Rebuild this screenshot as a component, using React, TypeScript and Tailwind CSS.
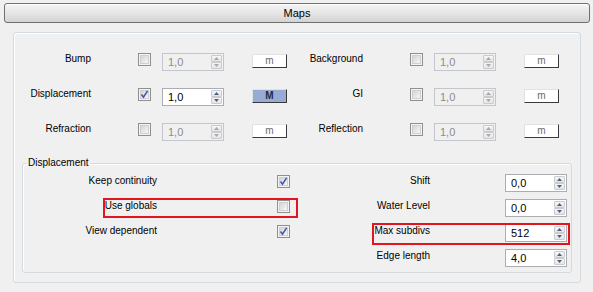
import React from "react";

type SpinProps = { value: string; enabled?: boolean };

const Check = ({ checked = false }: { checked?: boolean }) => (
  <div className="flex h-[13px] w-[13px] shrink-0 items-center justify-center border border-[#8f8f8f] bg-[#f4f4f4]">
    <div className="relative h-[9px] w-[9px] border border-[#cfcfcf] bg-gradient-to-br from-[#d4d4d4] to-[#f7f7f7]">
      {checked && (
        <svg width="11" height="11" viewBox="0 0 11 11" className="absolute -left-[2px] -top-[2px]">
          <path d="M2.5 5.5 L4.5 8.2 L8.6 1.8" fill="none" stroke="#4153ab" strokeWidth="1.5" />
        </svg>
      )}
    </div>
  </div>
);

const Arrow = ({ up, enabled }: { up: boolean; enabled: boolean }) => (
  <div className="flex flex-1 items-center justify-center rounded-[1px] border border-[#c9cbce] bg-gradient-to-b from-[#f6f6f6] to-[#e4e4e4]">
    <svg width="5" height="3" viewBox="0 0 5 3">
      <path d={up ? "M0 3 L2.5 0 L5 3 Z" : "M0 0 L2.5 3 L5 0 Z"} fill={enabled ? "#4c5f88" : "#a9a9a9"} />
    </svg>
  </div>
);

const Spin = ({ value, enabled = false }: SpinProps) => (
  <div
    className={`flex h-[18px] w-[62px] shrink-0 border ${
      enabled ? "border-[#abadb3] bg-white" : "border-[#c3c6ca] bg-[#f0f0f0]"
    }`}
  >
    <div className={`flex-1 pl-[5px] text-[11px] leading-[16px] ${enabled ? "text-black" : "text-[#8c8c8c]"}`}>
      {value}
    </div>
    <div className="flex w-[13px] flex-col p-[1px]">
      <Arrow up enabled={enabled} />
      <Arrow up={false} enabled={enabled} />
    </div>
  </div>
);

const MapButton = ({ active = false }: { active?: boolean }) => (
  <div
    className={`mt-[1px] flex h-[14px] w-[35px] shrink-0 items-center justify-center border border-t-[#e2e2e2] border-l-[#e2e2e2] border-r-[#3a3a3a] border-b-[#3a3a3a] text-[10px] leading-none ${
      active ? "bg-[#97abd4] font-bold text-[#1f2a44]" : "bg-white text-[#6a6a6a]"
    }`}
  >
    {active ? "M" : "m"}
  </div>
);

const MapHalf = ({
  label,
  labelW,
  checked,
  active,
}: {
  label: string;
  labelW: string;
  checked?: boolean;
  active?: boolean;
}) => (
  <div className="flex items-start">
    <div className={`${labelW} text-right leading-[12px]`}>{label}</div>
    <div className="ml-[47px]">
      <Check checked={checked} />
    </div>
    <div className="ml-[11px]">
      <Spin value="1,0" enabled={active} />
    </div>
    <div className="ml-[28px]">
      <MapButton active={active} />
    </div>
  </div>
);

const rows = [
  { left: "Bump", right: "Background", active: false },
  { left: "Displacement", right: "GI", active: true },
  { left: "Refraction", right: "Reflection", active: false },
];

const dispRows = [
  { left: "Keep continuity", checked: true, right: "Shift", value: "0,0" },
  { left: "Use globals", checked: false, right: "Water Level", value: "0,0" },
  { left: "View dependent", checked: true, right: "Max subdivs", value: "512" },
  { left: "", checked: null, right: "Edge length", value: "4,0" },
];

export default function App() {
  return (
    <div className="h-[292px] w-[593px] overflow-hidden bg-[#f0f0f0] px-[4px] pt-[3px] font-['Liberation_Sans',Arial,sans-serif] text-[10px] text-black">
      {/* header bar */}
      <div className="flex h-[20px] w-[586px] items-center justify-center rounded-[3px] border border-[#707070] bg-gradient-to-b from-[#f4f4f4] via-[#e6e6e6] to-[#d3d3d3] text-[11px] shadow-[inset_0_1px_0_#fff]">
        Maps
      </div>

      {/* panel */}
      <div className="ml-[9px] mt-[9px] h-[251px] w-[568px] rounded-[3px] border border-[#d3dbe1] shadow-[inset_1px_1px_0_#fff]">
        <div className="flex flex-col gap-[17px] pt-[20px]">
          {rows.map((r) => (
            <div key={r.left} className="flex h-[18px] items-start">
              <MapHalf label={r.left} labelW="w-[77px]" checked={r.active} active={r.active} />
              <MapHalf label={r.right} labelW="w-[76px]" />
            </div>
          ))}
        </div>

        {/* displacement group */}
        <div className="relative ml-[8px] mt-[22px] h-[110px] w-[550px] rounded-[3px] border border-[#d3dbe1] shadow-[inset_1px_1px_0_#fff]">
          <span className="absolute -top-[8px] left-[4px] bg-[#f0f0f0] px-[1px] leading-[14px]">Displacement</span>
          <div className="flex flex-col gap-[7px] pt-[10px]">
            {dispRows.map((r) => (
              <div key={r.right} className="flex h-[18px] items-start">
                <div className="w-[134px] text-right leading-[14px]">{r.left}</div>
                <div className="ml-[120px] mt-[1px] w-[13px]">
                  {r.checked !== null && <Check checked={r.checked} />}
                </div>
                <div className="w-[140px] text-right leading-[14px]">{r.right}</div>
                <div className="ml-[75px]">
                  <Spin value={r.value} enabled />
                </div>
              </div>
            ))}
          </div>

          {/* annotation boxes */}
          <div className="pointer-events-none absolute left-[80px] top-[34px] h-[20px] w-[195px] border-2 border-[#e3141d]" />
          <div className="pointer-events-none absolute left-[349px] top-[59px] h-[22px] w-[198px] border-2 border-[#e3141d]" />
        </div>
      </div>
    </div>
  );
}
